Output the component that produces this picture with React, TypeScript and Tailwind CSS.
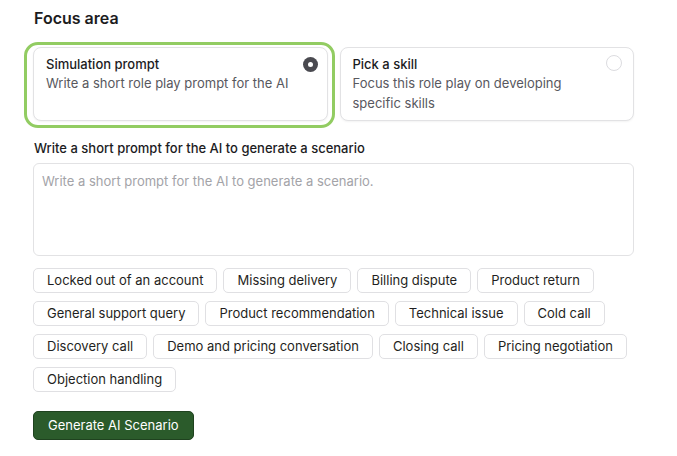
import { useState } from "react";

type Option = {
  id: string;
  title: string;
  description: string;
};

const options: Option[] = [
  {
    id: "prompt",
    title: "Simulation prompt",
    description: "Write a short role play prompt for the AI",
  },
  {
    id: "skill",
    title: "Pick a skill",
    description: "Focus this role play on developing specific skills",
  },
];

const suggestions = [
  "Locked out of an account",
  "Missing delivery",
  "Billing dispute",
  "Product return",
  "General support query",
  "Product recommendation",
  "Technical issue",
  "Cold call",
  "Discovery call",
  "Demo and pricing conversation",
  "Closing call",
  "Pricing negotiation",
  "Objection handling",
];

export default function App() {
  const [focus, setFocus] = useState("prompt");
  const [prompt, setPrompt] = useState("");

  return (
    <div
      className="min-h-screen bg-white pl-[33px] pr-[43px] pt-[6px] text-[#1c1c1e]"
      style={{ fontFamily: "Inter, 'Noto Sans', sans-serif" }}
    >
      <h2 className="pl-px text-[16px] font-semibold leading-6">Focus area</h2>

      <div className="mt-[17px] grid grid-cols-2 gap-3">
        {options.map((o) => {
          const active = focus === o.id;
          return (
            <button
              key={o.id}
              type="button"
              onClick={() => setFocus(o.id)}
              className="relative flex flex-col items-start justify-start rounded-lg border border-[#e2e2e4] bg-white pb-[7px] pl-3 pr-6 pt-[7px] text-left shadow-[0_1px_2px_rgba(0,0,0,0.05)]"
            >
              {active && (
                <span className="pointer-events-none absolute -bottom-[8px] -left-[10px] -right-[8px] -top-[6px] rounded-[14px] border-[3px] border-[#92cc62]" />
              )}
              <div className="text-[13px] font-medium leading-[18px] text-[#1c1c1e]">{o.title}</div>
              <div className="text-[13px] leading-5 text-[#58585e]">{o.description}</div>
              {active ? (
                <span className="absolute right-[9px] top-[9px] flex h-[15px] w-[15px] items-center justify-center rounded-full bg-[#4a4a50]">
                  <span className="h-[5px] w-[5px] rounded-full bg-white" />
                </span>
              ) : (
                <span className="absolute right-[11px] top-[7px] h-[16px] w-[16px] rounded-full border border-[#dcdce0] bg-white" />
              )}
            </button>
          );
        })}
      </div>

      <label className="mt-[17px] block pl-px text-[13px] font-medium leading-5 text-[#1c1c1e]">
        Write a short prompt for the AI to generate a scenario
      </label>
      <textarea
        value={prompt}
        onChange={(e) => setPrompt(e.target.value)}
        placeholder="Write a short prompt for the AI to generate a scenario."
        className="mt-[5px] block h-[93px] w-full resize-none rounded-md border border-[#e2e2e4] px-2 py-[7px] text-[13px] leading-5 text-[#1c1c1e] placeholder:text-[#a3a3a8] focus:outline-none"
      />

      <div className="mt-3 flex flex-wrap gap-x-1.5 gap-y-2">
        {suggestions.map((s) => (
          <button
            key={s}
            type="button"
            onClick={() => setPrompt(s)}
            className="h-[25px] rounded-[5px] border border-[#e0e0e3] bg-white px-[13px] text-[13px] leading-none text-[#1f1f22]"
          >
            {s}
          </button>
        ))}
      </div>

      <button
        type="button"
        className="mt-[19px] h-[29px] rounded-[5px] border border-[#1f421f] bg-[#2b5b2b] px-[14px] text-[13px] leading-none text-white"
      >
        Generate AI Scenario
      </button>
    </div>
  );
}
